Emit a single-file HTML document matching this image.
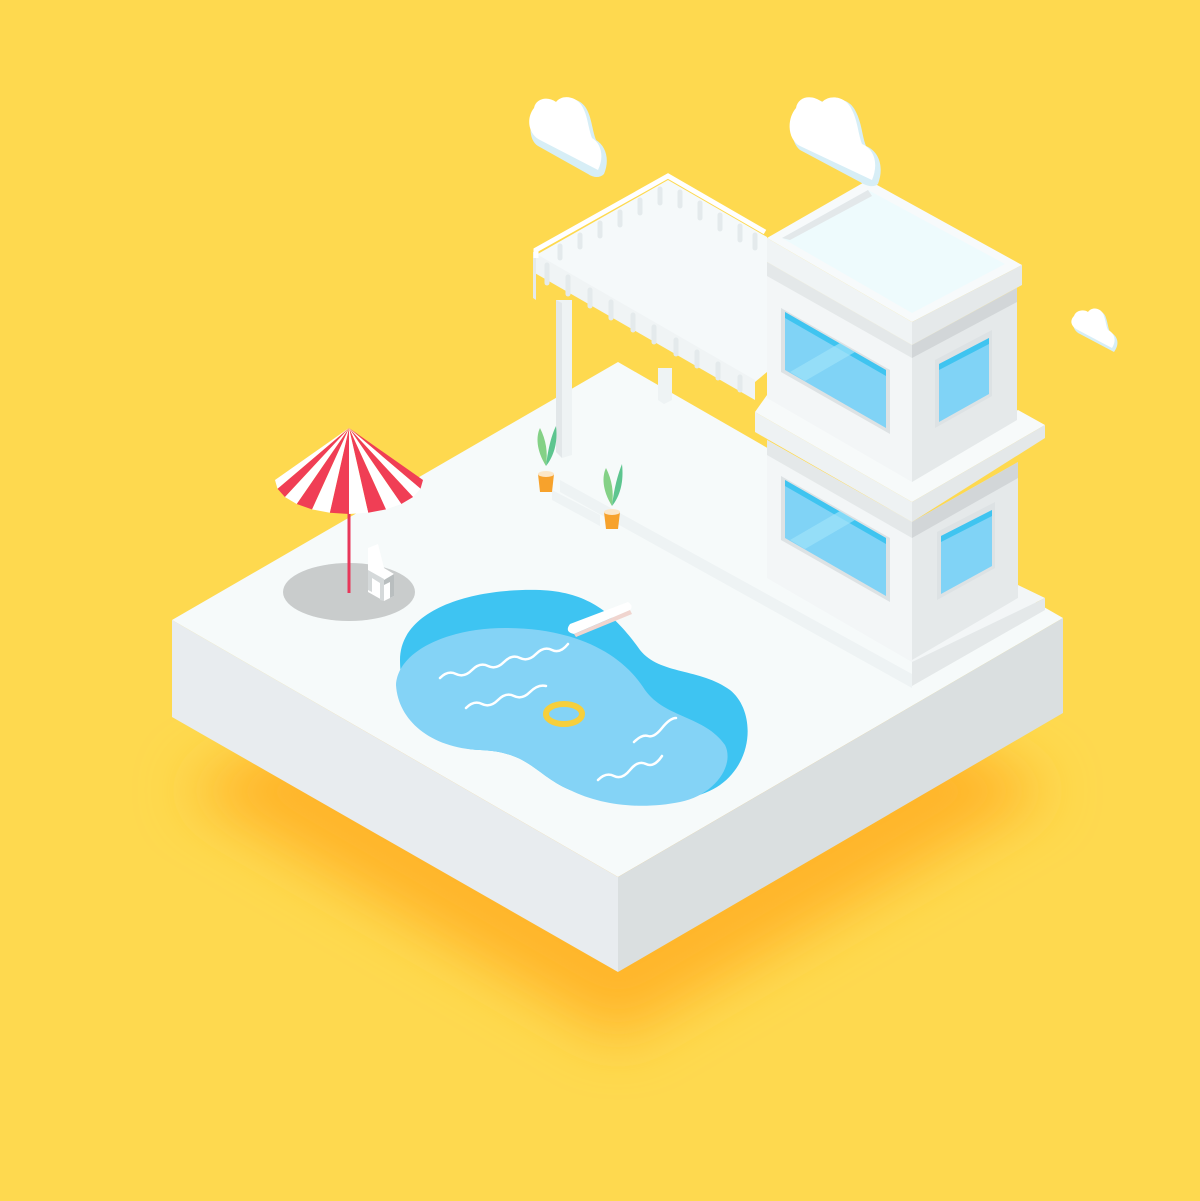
<!DOCTYPE html>
<html><head><meta charset="utf-8"><style>html,body{margin:0;padding:0;background:#FED94F}svg{display:block}</style></head>
<body>
<svg width="1200" height="1201" viewBox="0 0 1200 1201" xmlns="http://www.w3.org/2000/svg">
<defs>
<filter id="bl" x="-30%" y="-30%" width="160%" height="160%"><feGaussianBlur stdDeviation="28"/></filter>
</defs>
<rect width="1200" height="1201" fill="#FED94F"/>
<polygon points="185,790 618,1040 1050,790 618,560" fill="#FFB62A" filter="url(#bl)"/>
<polygon points="172,620 618,362 1063,618 618,877" fill="#F6FAFA"/>
<polygon points="172,620 618,877 618,972 172,717" fill="#E8ECEF"/>
<polygon points="618,877 1063,618 1063,713 618,972" fill="#DADFE0"/>
<ellipse cx="349" cy="592" rx="66" ry="29" fill="#C9CCCC"/>
<polygon points="368,548 378,544 384,568 394,574 394,596 384,601 368,592" fill="#fff"/>
<polygon points="368,570 384,579 384,601 380,600 380,583 372,578 372,592 368,590" fill="#D5D9DA"/>
<polygon points="384,580 394,574 394,596 390,598 390,582 384,585" fill="#B9BEBF"/>
<line x1="349" y1="475" x2="349" y2="593" stroke="#E8375A" stroke-width="3"/>
<g>
<polygon points="349,428 423,480 420.5,488.8" fill="#F03E55"/>
<polygon points="349,428 420.5,488.8 413.1,497" fill="#fff"/>
<polygon points="349,428 413.1,497 401.3,504" fill="#F03E55"/>
<polygon points="349,428 401.3,504 386,509.4" fill="#fff"/>
<polygon points="349,428 386,509.4 368.2,512.8" fill="#F03E55"/>
<polygon points="349,428 368.2,512.8 349,514" fill="#fff"/>
<polygon points="349,428 349,514 329.8,512.8" fill="#F03E55"/>
<polygon points="349,428 329.8,512.8 312,509.4" fill="#fff"/>
<polygon points="349,428 312,509.4 296.7,504" fill="#F03E55"/>
<polygon points="349,428 296.7,504 284.9,497" fill="#fff"/>
<polygon points="349,428 284.9,497 277.5,488.8" fill="#F03E55"/>
<polygon points="349,428 277.5,488.8 275,480" fill="#fff"/>
</g>
<path d="M400,660 C400,610 470,588 540,590 C590,592 615,615 640,650 C660,675 700,668 730,690 C755,710 755,760 720,785 C690,806 620,810 570,790 C535,775 530,752 480,750 C430,748 400,710 400,660 Z" fill="#3EC4F2"/>
<path d="M396,685 C398,650 450,628 505,628 C570,628 620,650 645,690 C665,718 705,716 725,745 C735,765 715,795 680,802 C640,810 600,805 570,790 C535,775 530,752 480,750 C430,748 398,720 396,685 Z" fill="#84D3F6"/>
<g fill="none" stroke="#fff" stroke-width="2.5" stroke-linecap="round">
<path d="M440,678 q8,-8 16,-4 t16,-4 t16,-4 t16,-4 t16,-4 t16,-4 t16,-4 t16,-6"/>
<path d="M466,708 q8,-8 16,-4 t16,-4 t16,-4 t16,-4 t16,-6"/>
<path d="M634,742 q8,-8 14,-6 t14,-8 t14,-10"/>
<path d="M598,780 q8,-8 16,-4 t16,-6 t16,-6 t16,-8"/>
</g>
<ellipse cx="564" cy="714" rx="18" ry="10" fill="none" stroke="#F6CF3C" stroke-width="6"/>
<path d="M570,624 L628,602 Q634,606 630,610 L574,634 Q564,632 570,624Z" fill="#fff"/>
<path d="M574,634 L630,610 L632,614 L576,637Z" fill="#F0D5CF"/>
<polygon points="560,480 912,674 912,688 560,492" fill="#EEF3F4"/>
<polygon points="552,490 600,515 600,526 552,500" fill="#EEF3F4"/>
<polygon points="556,300 572,300 572,455 562,458 556,452" fill="#EEF3F4"/>
<polygon points="556,300 562,303 562,458 556,452" fill="#E2E7E9"/>
<polygon points="658,368 672,368 672,400 664,404 658,400" fill="#EEF3F4"/>
<polygon points="536,255 668,180 767,237 767,372 755,382" fill="#F5F9FA"/>
<polygon points="533,252 755,380 755,400 533,272" fill="#F0F4F5"/>
<polygon points="533,252 536,255 536,300 533,298" fill="#E5EAEB"/>
<g stroke="#E4EAEC" stroke-width="5" stroke-linecap="round">
<line x1="547" y1="265" x2="547" y2="283"/><line x1="568" y1="277" x2="568" y2="294"/><line x1="590" y1="290" x2="590" y2="306"/><line x1="611" y1="302" x2="611" y2="318"/><line x1="633" y1="315" x2="633" y2="330"/><line x1="654" y1="327" x2="654" y2="342"/><line x1="676" y1="340" x2="676" y2="354"/><line x1="697" y1="352" x2="697" y2="366"/><line x1="718" y1="364" x2="718" y2="378"/><line x1="740" y1="377" x2="740" y2="390"/>
<line x1="560" y1="246" x2="560" y2="258"/><line x1="580" y1="235" x2="580" y2="247"/><line x1="600" y1="223" x2="600" y2="236"/><line x1="620" y1="212" x2="620" y2="225"/><line x1="640" y1="200" x2="640" y2="213"/><line x1="660" y1="189" x2="660" y2="203"/>
<line x1="680" y1="192" x2="680" y2="206"/><line x1="700" y1="203" x2="700" y2="218"/><line x1="720" y1="215" x2="720" y2="229"/><line x1="740" y1="226" x2="740" y2="240"/><line x1="755" y1="235" x2="755" y2="248"/>
</g>
<polyline points="536,258 536,250 668,176 765,232" fill="none" stroke="#fff" stroke-width="5"/>
<polygon points="767,440 912,522 912,662 767,578" fill="#F3F6F7"/>
<polygon points="912,522 1018,462 1018,598 912,662" fill="#E5E9EA"/>
<polygon points="767,440 912,522 912,538 767,455" fill="#E4E8E9"/>
<polygon points="912,522 1018,462 1018,478 912,538" fill="#D2D6D8"/>
<polygon points="767,578 912,662 1045,598 1018,585 1018,598 912,660" fill="#F3F6F7"/>
<polygon points="912,662 1045,598 1045,610 912,686" fill="#E4E8E9"/>
<polygon points="755,412 912,502 1045,425 1018,410 912,470 767,395" fill="#F7FAFA"/>
<polygon points="755,412 912,502 912,522 755,432" fill="#EEF2F3"/>
<polygon points="912,502 1045,425 1045,438 912,522" fill="#E4E8E9"/>
<polygon points="767,262 912,345 912,482 767,398" fill="#F3F6F7"/>
<polygon points="912,345 1017,288 1017,420 912,482" fill="#E5E9EA"/>
<polygon points="767,262 912,345 912,358 767,276" fill="#E4E8E9"/>
<polygon points="912,345 1017,288 1017,302 912,358" fill="#D2D6D8"/>
<polygon points="767,238 868,180 1022,265 912,322" fill="#F7FAFB"/>
<polygon points="782,238 868,190 1005,264 912,313" fill="#EEFBFD"/>
<polygon points="782,238 868,190 872,196 790,240" fill="#E3E8EA"/>
<polygon points="767,238 912,322 912,345 767,262" fill="#F0F4F5"/>
<polygon points="912,322 1022,265 1022,285 912,345" fill="#E5E9EA"/>
<g>
<polygon points="781,308 890,370 890,434 781,372" fill="#DDE2E4"/>
<polygon points="785,312 886,370 886,428 785,370" fill="#80D3F6"/>
<polygon points="785,312 886,370 886,376 785,318" fill="#3FC4F0"/>
<polygon points="790,372 840,343 855,352 805,381" fill="#9EE3F9" opacity=".7"/>
<polygon points="935,360 992,330 992,396 935,428" fill="#DDE2E4"/>
<polygon points="939,364 989,338 989,394 939,422" fill="#80D3F6"/>
<polygon points="939,364 989,338 989,344 939,370" fill="#3FC4F0"/>
<polygon points="781,476 890,538 890,602 781,540" fill="#DDE2E4"/>
<polygon points="785,480 886,538 886,596 785,538" fill="#80D3F6"/>
<polygon points="785,480 886,538 886,544 785,486" fill="#3FC4F0"/>
<polygon points="790,540 840,511 855,520 805,549" fill="#9EE3F9" opacity=".7"/>
<polygon points="937,532 995,502 995,568 937,600" fill="#DDE2E4"/>
<polygon points="941,536 992,510 992,566 941,594" fill="#80D3F6"/>
<polygon points="941,536 992,510 992,516 941,542" fill="#3FC4F0"/>
</g>
<g>
<path d="M546,466 C536,450 536,436 540,428 C546,440 548,452 546,466Z" fill="#84D186"/>
<path d="M546,466 C548,448 552,434 556,426 C558,442 554,456 546,466Z" fill="#5DC58F"/>
<path d="M538,474 L554,474 L552,492 L540,492Z" fill="#F7A22C"/>
<ellipse cx="546" cy="474" rx="8" ry="3" fill="#FCE7C8"/>
<path d="M612,506 C602,490 602,476 606,468 C612,480 614,492 612,506Z" fill="#84D186"/>
<path d="M612,506 C614,488 618,474 622,464 C624,482 620,496 612,506Z" fill="#5DC58F"/>
<path d="M604,512 L620,512 L618,529 L606,529Z" fill="#F7A22C"/>
<ellipse cx="612" cy="512" rx="8" ry="3" fill="#FCE7C8"/>
</g>
<g>
<path d="M538,110 C540,100 552,98 560,104 C566,96 580,98 586,108 C592,118 592,130 596,140 C606,146 610,160 604,174 C600,178 594,178 588,174 L538,146 C528,140 528,120 538,110Z" fill="#D7EEF6"/>
<path d="M534,108 C536,98 548,96 556,102 C562,94 576,96 582,106 C588,116 588,128 592,138 C602,144 604,158 598,170 L540,140 C528,134 526,118 534,108Z" fill="#fff"/>
<path d="M800,110 C802,98 816,96 826,104 C834,96 850,98 856,112 C862,124 862,136 866,146 C880,152 884,168 878,184 C874,188 866,186 860,182 L800,150 C790,142 790,122 800,110Z" fill="#D7EEF6"/>
<path d="M796,108 C798,96 812,94 822,102 C830,94 846,96 852,110 C858,122 858,134 862,144 C876,150 878,166 872,180 L800,146 C788,140 786,120 796,108Z" fill="#fff"/>
<path d="M1076,318 C1078,312 1086,311 1090,314 C1094,308 1104,310 1106,318 C1108,324 1108,328 1110,332 C1118,336 1120,344 1114,352 L1080,334 C1072,330 1072,322 1076,318Z" fill="#D7EEF6"/>
<path d="M1074,316 C1076,310 1084,309 1088,312 C1092,306 1102,308 1104,316 C1106,322 1106,326 1108,330 C1116,334 1116,342 1112,348 L1078,330 C1070,326 1070,320 1074,316Z" fill="#fff"/>
</g>
</svg>
</body></html>
